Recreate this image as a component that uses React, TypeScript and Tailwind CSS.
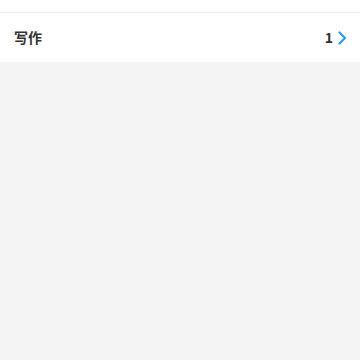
import React from 'react';

const App: React.FC = () => {
  return (
    <div className="w-[360px] h-[360px] bg-[#f4f4f4] overflow-hidden" style={{ fontFamily: '"Noto Sans CJK SC", "Noto Sans", sans-serif' }}>
      <div className="h-[13px] bg-white border-b border-[#f0f0f0]" />
      <div className="h-[49px] bg-white flex items-center justify-between pl-[14px] pr-[13px]">
        <span className="text-[14px] font-bold text-[#333]">写作</span>
        <div className="flex items-center gap-[5px]">
          <span className="text-[14px] font-bold text-[#333]">1</span>
          <svg width="9" height="14" viewBox="0 0 9 14" fill="none">
            <path d="M1.5 1.5 L7 7 L1.5 12.5" stroke="#2b9af3" strokeWidth="2.2" strokeLinecap="round" strokeLinejoin="round" />
          </svg>
        </div>
      </div>
    </div>
  );
};

export default App;
